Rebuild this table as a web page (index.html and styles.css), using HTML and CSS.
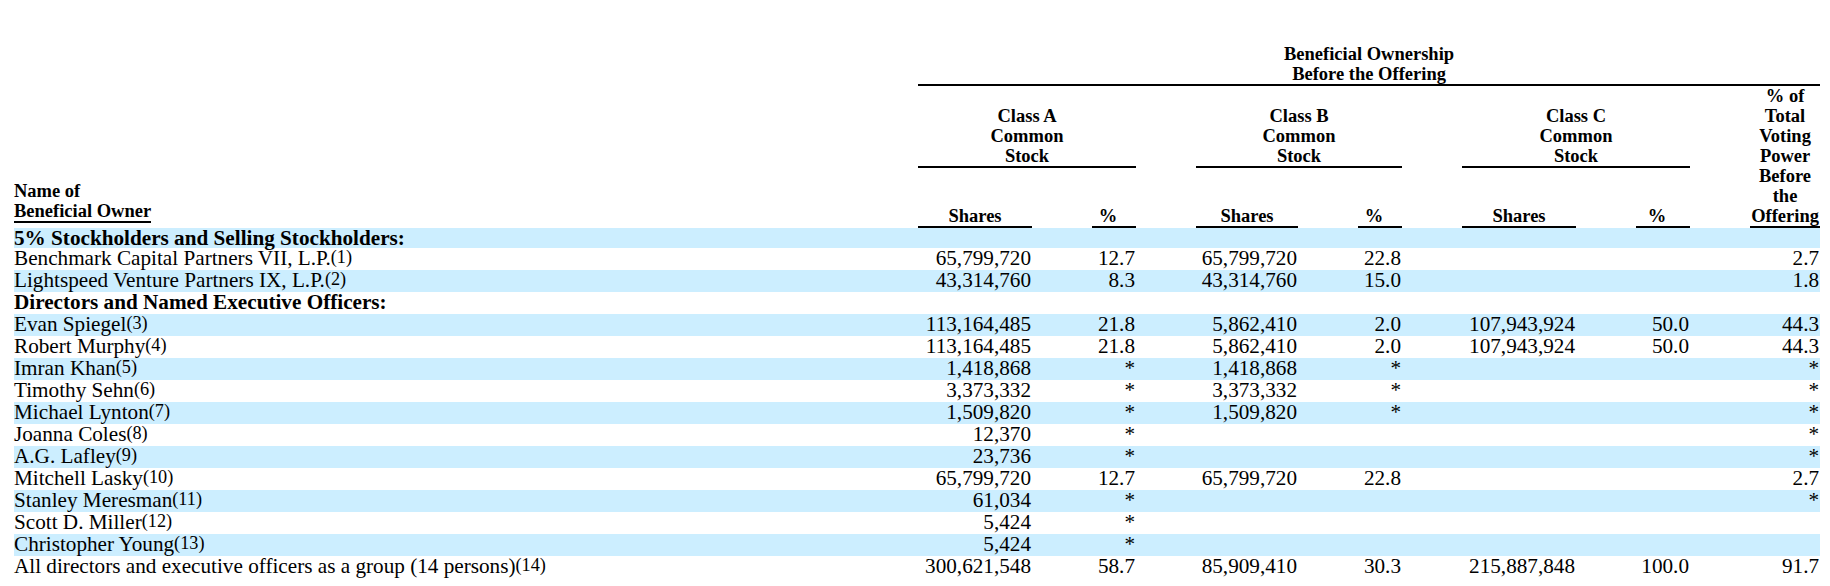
FILE: index.html
```html
<!DOCTYPE html>
<html lang="en">
<head>
<meta charset="utf-8">
<title>Beneficial Ownership</title>
<link rel="stylesheet" href="styles.css">
</head>
<body>
<div class="page">
<table class="own">
  <colgroup>
    <col class="c-name">
    <col class="c-sh">
    <col class="c-gap">
    <col class="c-pct">
    <col class="c-gap">
    <col class="c-sh-b">
    <col class="c-gap">
    <col class="c-pct">
    <col class="c-gap">
    <col class="c-sh">
    <col class="c-gap">
    <col class="c-pct-c">
    <col class="c-gap">
    <col class="c-tot">
  </colgroup>
  <thead>
    <tr>
      <th rowspan="3" class="name-h"><div>Name of</div><div><span class="uline">Beneficial Owner</span></div></th>
      <th colspan="13" class="grp">Beneficial Ownership<br>Before the Offering</th>
    </tr>
    <tr>
      <th colspan="3" class="cls">Class A<br>Common<br>Stock</th>
      <th></th>
      <th colspan="3" class="cls">Class B<br>Common<br>Stock</th>
      <th></th>
      <th colspan="3" class="cls">Class C<br>Common<br>Stock</th>
      <th></th>
      <th rowspan="2" class="tot">% of<br>Total<br>Voting<br>Power<br>Before<br>the<br>Offering</th>
    </tr>
    <tr>
      <th class="sub">Shares</th><th></th><th class="sub pct">%</th><th></th>
      <th class="sub">Shares</th><th></th><th class="sub pct">%</th><th></th>
      <th class="sub">Shares</th><th></th><th class="sub pct">%</th><th></th>
    </tr>
  </thead>
  <tbody>
    <tr class="sect first"><td colspan="14">5% Stockholders and Selling Stockholders:</td></tr>
    <tr><td>Benchmark Capital Partners VII, L.P.<span class="fn">(1)</span></td><td class="n">65,799,720</td><td></td><td class="n">12.7</td><td></td><td class="n">65,799,720</td><td></td><td class="n">22.8</td><td></td><td class="n"></td><td></td><td class="n"></td><td></td><td class="n">2.7</td></tr>
    <tr><td>Lightspeed Venture Partners IX, L.P.<span class="fn">(2)</span></td><td class="n">43,314,760</td><td></td><td class="n">8.3</td><td></td><td class="n">43,314,760</td><td></td><td class="n">15.0</td><td></td><td class="n"></td><td></td><td class="n"></td><td></td><td class="n">1.8</td></tr>
    <tr class="sect"><td colspan="14">Directors and Named Executive Officers:</td></tr>
    <tr><td>Evan Spiegel<span class="fn">(3)</span></td><td class="n">113,164,485</td><td></td><td class="n">21.8</td><td></td><td class="n">5,862,410</td><td></td><td class="n">2.0</td><td></td><td class="n">107,943,924</td><td></td><td class="n">50.0</td><td></td><td class="n">44.3</td></tr>
    <tr><td>Robert Murphy<span class="fn">(4)</span></td><td class="n">113,164,485</td><td></td><td class="n">21.8</td><td></td><td class="n">5,862,410</td><td></td><td class="n">2.0</td><td></td><td class="n">107,943,924</td><td></td><td class="n">50.0</td><td></td><td class="n">44.3</td></tr>
    <tr><td>Imran Khan<span class="fn">(5)</span></td><td class="n">1,418,868</td><td></td><td class="n">*</td><td></td><td class="n">1,418,868</td><td></td><td class="n">*</td><td></td><td class="n"></td><td></td><td class="n"></td><td></td><td class="n">*</td></tr>
    <tr><td>Timothy Sehn<span class="fn">(6)</span></td><td class="n">3,373,332</td><td></td><td class="n">*</td><td></td><td class="n">3,373,332</td><td></td><td class="n">*</td><td></td><td class="n"></td><td></td><td class="n"></td><td></td><td class="n">*</td></tr>
    <tr><td>Michael Lynton<span class="fn">(7)</span></td><td class="n">1,509,820</td><td></td><td class="n">*</td><td></td><td class="n">1,509,820</td><td></td><td class="n">*</td><td></td><td class="n"></td><td></td><td class="n"></td><td></td><td class="n">*</td></tr>
    <tr><td>Joanna Coles<span class="fn">(8)</span></td><td class="n">12,370</td><td></td><td class="n">*</td><td></td><td class="n"></td><td></td><td class="n"></td><td></td><td class="n"></td><td></td><td class="n"></td><td></td><td class="n">*</td></tr>
    <tr><td>A.G. Lafley<span class="fn">(9)</span></td><td class="n">23,736</td><td></td><td class="n">*</td><td></td><td class="n"></td><td></td><td class="n"></td><td></td><td class="n"></td><td></td><td class="n"></td><td></td><td class="n">*</td></tr>
    <tr><td>Mitchell Lasky<span class="fn">(10)</span></td><td class="n">65,799,720</td><td></td><td class="n">12.7</td><td></td><td class="n">65,799,720</td><td></td><td class="n">22.8</td><td></td><td class="n"></td><td></td><td class="n"></td><td></td><td class="n">2.7</td></tr>
    <tr><td>Stanley Meresman<span class="fn">(11)</span></td><td class="n">61,034</td><td></td><td class="n">*</td><td></td><td class="n"></td><td></td><td class="n"></td><td></td><td class="n"></td><td></td><td class="n"></td><td></td><td class="n">*</td></tr>
    <tr><td>Scott D. Miller<span class="fn">(12)</span></td><td class="n">5,424</td><td></td><td class="n">*</td><td></td><td class="n"></td><td></td><td class="n"></td><td></td><td class="n"></td><td></td><td class="n"></td><td></td><td class="n"></td></tr>
    <tr><td>Christopher Young<span class="fn">(13)</span></td><td class="n">5,424</td><td></td><td class="n">*</td><td></td><td class="n"></td><td></td><td class="n"></td><td></td><td class="n"></td><td></td><td class="n"></td><td></td><td class="n"></td></tr>
    <tr><td>All directors and executive officers as a group (14 persons)<span class="fn">(14)</span></td><td class="n">300,621,548</td><td></td><td class="n">58.7</td><td></td><td class="n">85,909,410</td><td></td><td class="n">30.3</td><td></td><td class="n">215,887,848</td><td></td><td class="n">100.0</td><td></td><td class="n">91.7</td></tr>
  </tbody>
</table>
</div>
</body>
</html>
```
FILE: styles.css
```css
html, body {
  margin: 0;
  padding: 0;
  background: #ffffff;
}

.page {
  padding: 44px 10px 0 14px;
  font-family: "Liberation Serif", "Times New Roman", Times, serif;
  color: #000000;
}

.own {
  width: 1806px;
  table-layout: fixed;
  border-collapse: separate;
  border-spacing: 0;
}

.c-name { width: 904px; }
.c-sh { width: 114px; }
.c-sh-b { width: 102px; }
.c-gap { width: 60px; }
.c-pct { width: 44px; }
.c-pct-c { width: 54px; }
.c-tot { width: 70px; }

.own th {
  padding: 0;
  font-size: 18.5px;
  line-height: 20px;
  font-weight: bold;
  text-align: center;
  vertical-align: bottom;
  white-space: nowrap;
}

.own th.name-h {
  text-align: left;
  padding-bottom: 5px;
}

.uline {
  display: inline-block;
  border-bottom: 2px solid #000000;
}

.own th.grp {
  border-bottom: 2px solid #000000;
}

.own th.cls {
  padding-top: 20px;
  border-bottom: 2px solid #000000;
}

.own th.tot {
  border-bottom: 2px solid #000000;
}

.own th.sub {
  padding-top: 38px;
  border-bottom: 2px solid #000000;
}

.own th.pct {
  padding-right: 12px;
}

.own tbody tr {
  height: 22px;
}

.own tbody tr.first {
  height: 20px;
}

.own td {
  padding: 0 0 2px 0;
  font-size: 21.2px;
  line-height: 20px;
  white-space: nowrap;
  vertical-align: top;
}

.own tbody tr:nth-child(odd) {
  background: #cceeff;
}

.own tr.sect td {
  font-weight: bold;
}

.own tr.first td {
  padding-bottom: 0;
}

.own td.n {
  text-align: right;
  padding-right: 1px;
}

.fn {
  font-size: 0.86em;
  line-height: 0;
  position: relative;
  top: -2px;
}
```
